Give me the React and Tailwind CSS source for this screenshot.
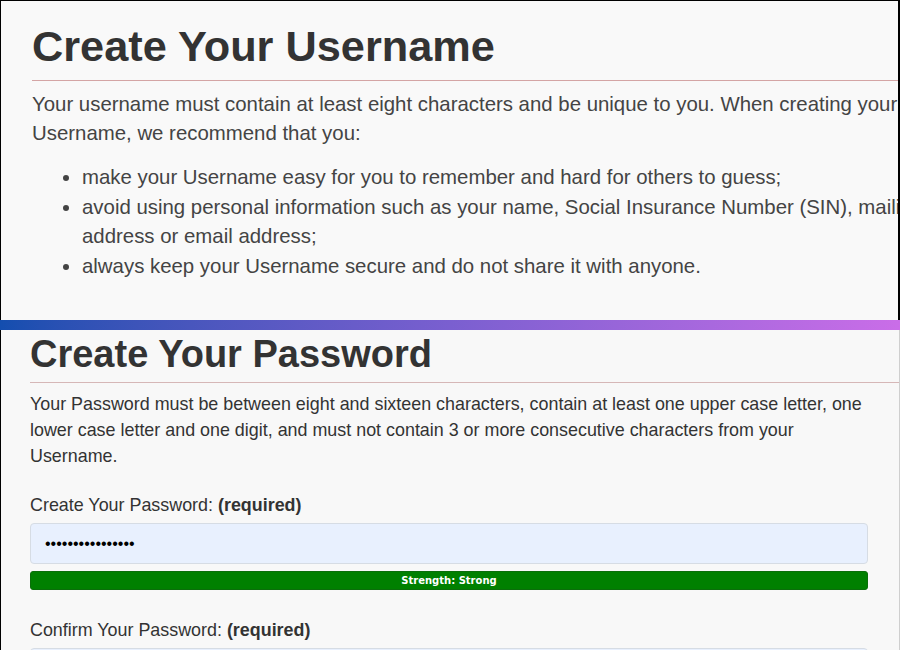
import React from 'react';

const usernameTips = [
  'make your Username easy for you to remember and hard for others to guess;',
  'avoid using personal information such as your name, Social Insurance Number (SIN), mailing address or email address;',
  'always keep your Username secure and do not share it with anyone.',
];

const UsernameSection = () => (
  <section className="h-[320px] overflow-hidden border-l border-t border-r-2 border-black bg-[#f9f9f9]">
    <div className="ml-[31px] w-[930px] text-[#444]">
      <h1 className="mt-[24px] text-[43.3px] font-bold leading-none text-[#333]">Create Your Username</h1>
      <div className="mt-[12px] h-px bg-[#d4a5a5]" />
      <p className="mt-[9px] text-[20.4px] leading-[29px]">
        Your username must contain at least eight characters and be unique to you. When creating your Username, we recommend that you:
      </p>
      <ul className="mt-[15px] list-disc pl-[50px] text-[20.4px] leading-[29.6px]">
        {usernameTips.map((tip, i) => (
          <li key={i}>{tip}</li>
        ))}
      </ul>
    </div>
  </section>
);

const PasswordField = ({ label, value, strength }) => (
  <div>
    <label className="block text-[17.9px] leading-[26px] text-[#333]">
      {label}: <span className="font-bold">(required)</span>
    </label>
    <div className="mt-[5px] flex h-[41px] items-center rounded-[4px] border border-[#d6dce4] bg-[#e8f0fe] px-[14px] text-[16px] text-black">
      {value}
    </div>
    {strength && (
      <div
        className="mt-[7px] flex h-[19px] items-center justify-center rounded-[3px] border border-[#0a6e0a] bg-[#008000] text-[10px] font-bold text-white"
        style={{ fontFamily: '"DejaVu Sans", sans-serif' }}
      >
        Strength: {strength}
      </div>
    )}
  </div>
);

const PasswordSection = () => (
  <section className="flex-1 overflow-hidden border-l border-r border-l-black border-r-[#cfcfcf] bg-[#f8f8f8]">
    <div className="ml-[29px] w-[838px] text-[#333]">
      <h2 className="mt-[5px] text-[38px] font-bold leading-none">Create Your Password</h2>
      <div className="mt-[9px] mr-[-40px] h-px bg-[#d6b7b7]" />
      <p className="mt-[8px] text-[17.9px] leading-[26px]">
        Your Password must be between eight and sixteen characters, contain at least one upper case letter, one lower case letter and one digit, and must not contain 3 or more consecutive characters from your Username.
      </p>
      <div className="mt-[23px]">
        <PasswordField label="Create Your Password" value={'•'.repeat(16)} strength="Strong" />
      </div>
      <div className="mt-[27px]">
        <PasswordField label="Confirm Your Password" value="" />
      </div>
    </div>
  </section>
);

export default function App() {
  return (
    <div
      className="flex h-[650px] w-[900px] flex-col overflow-hidden bg-[#f9f9f9]"
      style={{ fontFamily: '"Liberation Sans", Arial, sans-serif' }}
    >
      <UsernameSection />
      <div className="h-[10px] shrink-0 bg-linear-to-r from-[#134eaf] via-[#7a5fd0] to-[#ca6de8]" />
      <PasswordSection />
    </div>
  );
}
